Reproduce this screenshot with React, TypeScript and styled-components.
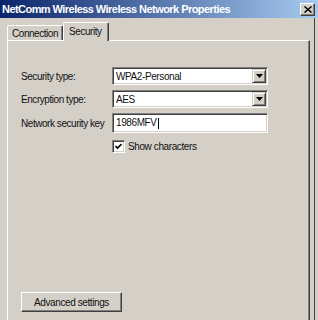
import React from 'react';
import styled, { createGlobalStyle } from 'styled-components';

const GlobalStyle = createGlobalStyle`
  html, body {
    margin: 0;
    padding: 0;
    overflow: hidden;
    background: #d4d0c8;
  }
  body {
    font-family: "Liberation Sans", Arial, sans-serif;
  }
`;

const Window = styled.div`
  width: 318px;
  height: 330px;
  display: flex;
  flex-direction: column;
  background: #d4d0c8;
`;

const TitleBar = styled.div`
  height: 18px;
  display: flex;
  align-items: center;
  justify-content: space-between;
  padding: 0 3px 0 2px;
  background: linear-gradient(to right, #0a246a, #a6caf0);
  color: #fff;
  font-weight: bold;
  font-size: 11px;
  letter-spacing: -0.55px;
  white-space: nowrap;
`;

const CloseButton = styled.div`
  width: 15px;
  height: 13px;
  margin-top: 1px;
  box-sizing: border-box;
  display: flex;
  align-items: center;
  justify-content: center;
  background: #d4d0c8;
  border-top: 1px solid #fff;
  border-left: 1px solid #fff;
  border-right: 1px solid #404040;
  border-bottom: 1px solid #404040;
  box-shadow: inset -1px -1px #808080;
`;

const Body = styled.div`
  flex: 1;
  display: flex;
  flex-direction: column;
  width: 315px;
  border-right: 1px solid #404040;
  box-sizing: border-box;
`;

const TabStrip = styled.div`
  display: flex;
  align-items: flex-end;
  height: 18px;
  margin-top: 4px;
  padding-left: 7px;
  position: relative;
  z-index: 1;
`;

const Tab = styled.div<{ $active?: boolean }>`
  height: ${(p) => (p.$active ? 19 : 15)}px;
  margin-bottom: ${(p) => (p.$active ? -1 : 0)}px;
  padding: 0 ${(p) => (p.$active ? '6px 0 5px' : '4px 0 4px')};
  box-sizing: border-box;
  display: flex;
  align-items: ${(p) => (p.$active ? 'flex-start' : 'center')};
  padding-top: ${(p) => (p.$active ? 3 : 0)}px;
  background: #d4d0c8;
  border-top: 1px solid #fff;
  border-left: 1px solid #fff;
  border-right: 1px solid #404040;
  border-radius: 2px 2px 0 0;
  box-shadow: inset -1px 0 #808080;
  font-size: 10px;
  letter-spacing: -0.45px;
  color: #111;
`;

const Panel = styled.div`
  flex: 1;
  display: flex;
  flex-direction: column;
  margin: 0 4px 0 7px;
  padding: 26px 13px 17px 13px;
  border-top: 1px solid #fff;
  border-left: 1px solid #fff;
  border-right: 1px solid #404040;
  border-bottom: 1px solid #404040;
  box-shadow: inset -1px -1px #808080;
`;

const Form = styled.div`
  display: grid;
  grid-template-columns: 91px 156px;
  grid-template-rows: 18px 18px 20px 13px;
  row-gap: 5px;
  align-items: center;
`;

const Label = styled.div`
  font-size: 10px;
  letter-spacing: -0.45px;
  color: #111;
  white-space: nowrap;
`;

const Sunken = styled.div`
  height: 100%;
  box-sizing: border-box;
  display: flex;
  align-items: center;
  background: #fff;
  border-top: 1px solid #808080;
  border-left: 1px solid #808080;
  border-right: 1px solid #fff;
  border-bottom: 1px solid #fff;
  box-shadow: inset 1px 1px #404040, inset -1px -1px #d4d0c8;
  padding: 2px 2px 2px 3px;
  font-size: 10px;
  letter-spacing: -0.4px;
  color: #111;
`;

const ValueText = styled.span`
  flex: 1;
`;

const Caret = styled.span`
  display: inline-block;
  width: 1px;
  height: 11px;
  background: #000;
  margin-left: 1px;
  vertical-align: middle;
`;

const DropButton = styled.div`
  width: 14px;
  height: 14px;
  margin-right: -1px;
  box-sizing: border-box;
  display: flex;
  align-items: center;
  justify-content: center;
  background: #d4d0c8;
  border-top: 1px solid #d4d0c8;
  border-left: 1px solid #d4d0c8;
  border-right: 1px solid #404040;
  border-bottom: 1px solid #404040;
  box-shadow: inset 1px 1px #fff, inset -1px -1px #808080;
`;

const CheckRow = styled.label`
  grid-column: 2;
  margin-top: 3px;
  display: flex;
  align-items: center;
  gap: 3px;
  font-size: 10px;
  letter-spacing: -0.4px;
  color: #111;
`;

const CheckBox = styled.div`
  width: 13px;
  height: 13px;
  box-sizing: border-box;
  display: flex;
  align-items: center;
  justify-content: center;
  background: #fff;
  border-top: 1px solid #808080;
  border-left: 1px solid #808080;
  border-right: 1px solid #fff;
  border-bottom: 1px solid #fff;
  box-shadow: inset 1px 1px #404040, inset -1px -1px #d4d0c8;
`;

const Button = styled.div`
  margin-top: auto;
  width: 101px;
  height: 20px;
  box-sizing: border-box;
  display: flex;
  align-items: center;
  justify-content: center;
  background: #d4d0c8;
  border-top: 1px solid #fff;
  border-left: 1px solid #fff;
  border-right: 1px solid #404040;
  border-bottom: 1px solid #404040;
  box-shadow: inset -1px -1px #808080;
  font-size: 10px;
  letter-spacing: -0.4px;
  color: #111;
`;

const Arrow = () => (
  <svg width="7" height="4" viewBox="0 0 7 4">
    <path d="M0 0h7L3.5 4z" fill="#000" />
  </svg>
);

const Combo = ({ value }: { value: string }) => (
  <Sunken>
    <ValueText>{value}</ValueText>
    <DropButton>
      <Arrow />
    </DropButton>
  </Sunken>
);

export default function App() {
  return (
    <>
      <GlobalStyle />
      <Window>
        <TitleBar>
          <span>NetComm Wireless Wireless Network Properties</span>
          <CloseButton>
            <svg width="8" height="7" viewBox="0 0 8 7">
              <path d="M0.5 0.5L7.5 6.5M7.5 0.5L0.5 6.5" stroke="#000" strokeWidth="1.5" />
            </svg>
          </CloseButton>
        </TitleBar>
        <Body>
          <TabStrip>
            <Tab>Connection</Tab>
            <Tab $active>Security</Tab>
          </TabStrip>
          <Panel>
            <Form>
              <Label>Security type:</Label>
              <Combo value="WPA2-Personal" />
              <Label>Encryption type:</Label>
              <Combo value="AES" />
              <Label>Network security key</Label>
              <Sunken>
                <ValueText>
                  1986MFV
                  <Caret />
                </ValueText>
              </Sunken>
              <CheckRow>
                <CheckBox>
                  <svg width="7" height="7" viewBox="0 0 7 7">
                    <path d="M0.5 3L2.5 5L6.5 1" stroke="#000" strokeWidth="1.6" fill="none" />
                  </svg>
                </CheckBox>
                Show characters
              </CheckRow>
            </Form>
            <Button>Advanced settings</Button>
          </Panel>
        </Body>
      </Window>
    </>
  );
}
